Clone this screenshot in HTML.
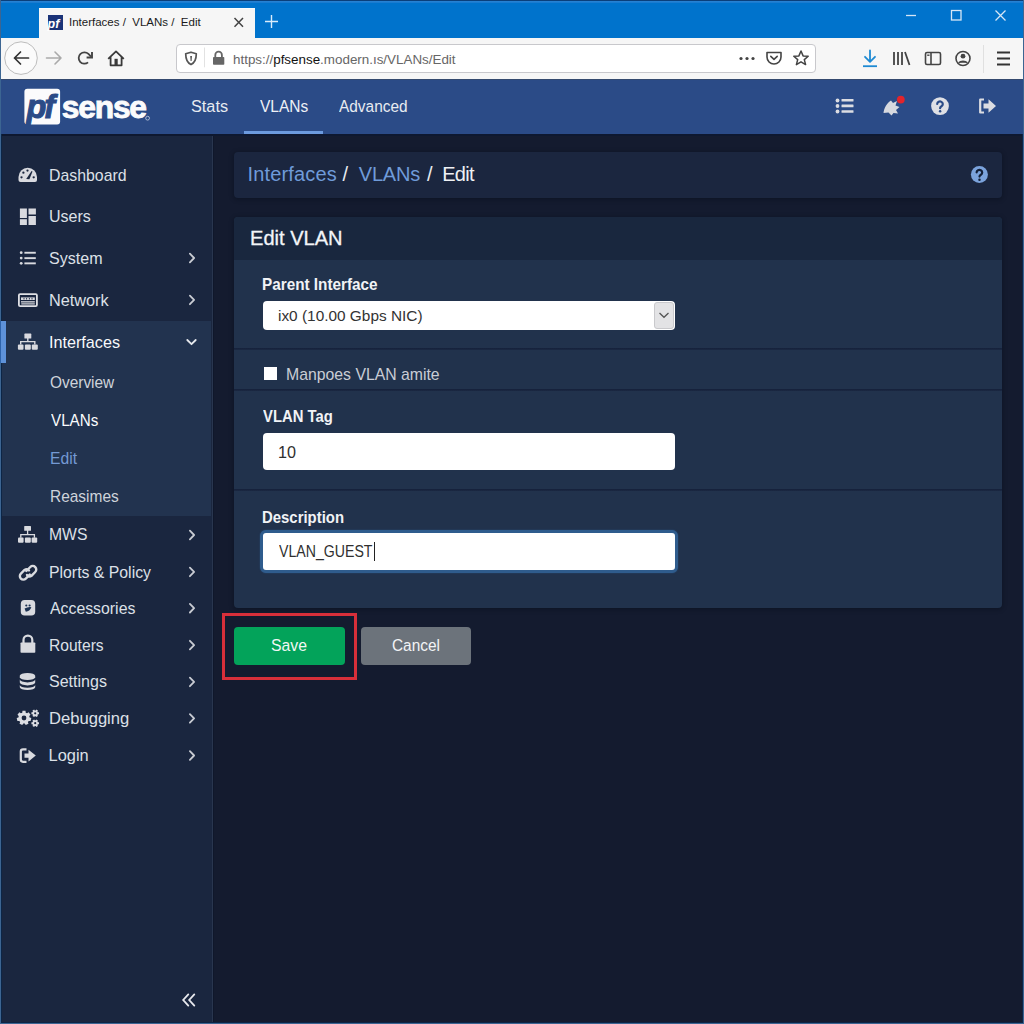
<!DOCTYPE html>
<html><head><meta charset="utf-8">
<style>
*{box-sizing:border-box;margin:0;padding:0}
html,body{width:1024px;height:1024px;overflow:hidden}
body{position:relative;background:#141b2f;font-family:"Liberation Sans",sans-serif}
.a{position:absolute}
.t{position:absolute;white-space:nowrap;line-height:1}
#titlebar{left:0;top:0;width:1024px;height:38px;background:linear-gradient(#0a3f7a 0,#0a3f7a 1px,#2a84d4 1px,#1a7bd0 2.5px,#0073cc 3.5px)}
#tab{left:39px;top:8px;width:216px;height:31px;background:#f6f6f6;border-top:1px solid #fafdff}
#toolbar{left:0;top:38px;width:1024px;height:41px;background:#f6f6f6}
#url{left:176px;top:44px;width:640px;height:29px;background:#fff;border:1px solid #c8c8cc;border-radius:4px}
#header{left:0;top:79px;width:1024px;height:55px;background:#2b4b87;border-top:1px solid #34496e}
#sidebar{left:0;top:134px;width:212px;height:890px;background:#1a263f}
#sideline{left:211.5px;top:134px;width:1.5px;height:890px;background:#29364f;box-shadow:1px 0 0 #0f172b}
#ifsec{left:0;top:321px;width:211px;height:195px;background:#22334f}
#ifbar{left:1px;top:321px;width:4px;height:42px;background:#4f86d0}
.nav{color:#d6d9df;font-size:15.5px}
.sub{color:#c3c8d1;font-size:15.5px}
#crumb{left:234px;top:152px;width:768px;height:46px;background:#1b263f;border-radius:4px;box-shadow:0 1px 5px rgba(5,10,22,0.45)}
#panel{left:234px;top:217px;width:768px;height:391px;background:#21324c;border-radius:4px;overflow:hidden;box-shadow:0 1px 5px rgba(5,10,22,0.45)}
#panelhead{left:0;top:0;width:768px;height:43px;background:#19273e}
.sep{position:absolute;left:0;width:768px;height:2px;background:linear-gradient(#15203a,#1b2943)}
.lbl{color:#f1f3f6;font-size:15px;font-weight:bold}
.inp{position:absolute;background:#fff;border-radius:4px}
.btn{position:absolute;border-radius:4px;color:#f4f6f5;font-size:16.8px;text-align:center;letter-spacing:-0.75px;-webkit-text-stroke:0.1px currentColor}
#border-l{left:0;top:0;width:1px;height:1024px;background:#3c6592}
#border-r{left:1023px;top:0;width:1px;height:1024px;background:#3c6592}
#border-b{left:0;top:1023px;width:1024px;height:1px;background:#3c6592}
#border-l2{left:1px;top:134px;width:1px;height:889px;background:#0c2546}
#border-r2{left:1022px;top:134px;width:1px;height:889px;background:#0c2546}
#border-b2{left:1px;top:1022px;width:1022px;height:1px;background:#0c2546}
</style></head><body>
<div id="titlebar" class="a"></div>
<div id="tab" class="a"></div>
<div id="toolbar" class="a"></div>
<div id="url" class="a"></div>
<div id="header" class="a"></div>
<div id="sidebar" class="a"></div>
<div id="sideline" class="a"></div>
<div id="ifsec" class="a"></div>
<div class="a" style="left:0;top:134px;width:1024px;height:1.5px;background:#0e1830"></div>

<!-- window controls -->
<svg class="a" style="left:0;top:0" width="1024" height="38">
  <line x1="906" y1="15.5" x2="916" y2="15.5" stroke="#d6e6f6" stroke-width="1.3"/>
  <rect x="951.5" y="10.5" width="9.5" height="9.5" fill="none" stroke="#d6e6f6" stroke-width="1.3"/>
  <path d="M995.5 10.5 L1005.5 20.5 M1005.5 10.5 L995.5 20.5" stroke="#d6e6f6" stroke-width="1.3"/>
  <path d="M265 21.5 H278 M271.5 15 V28" stroke="#d9ecfb" stroke-width="1.4"/>
  <path d="M234.5 18 L243 26.8 M243 18 L234.5 26.8" stroke="#444" stroke-width="1.5"/>
  <!-- favicon -->
  <rect x="48" y="15" width="15" height="15" fill="#1a3378"/>
  <text x="47.5" y="27.5" font-family="Liberation Sans" font-size="12.5" font-weight="bold" font-style="italic" fill="#fff">pf</text>
</svg>
<svg class="a" style="left:0;top:38px" width="1024" height="41">
  <circle cx="21" cy="20.1" r="16.3" fill="#fbfbfb" stroke="#bdbdbd" stroke-width="1"/>
  <path d="M28.5 20 H14.5 M20.5 14 L14.5 20 L20.5 26" fill="none" stroke="#333" stroke-width="1.7" stroke-linecap="round" stroke-linejoin="round"/>
  <path d="M46.5 20 H61 M55 14 L61 20 L55 26" fill="none" stroke="#aaa" stroke-width="1.6" stroke-linecap="round" stroke-linejoin="round"/>
  <path d="M91 18.6 L88.43 15.97 A5.7 5.7 0 1 0 88.06 24.37" fill="none" stroke="#444" stroke-width="1.8"/>
  <path d="M86.6 19.5 H92 V14" fill="none" stroke="#444" stroke-width="1.9"/>
  <path d="M108.2 20.8 L116 13.4 L123.8 20.8 M110.6 19.2 V27.3 H121.6 V19.2" fill="none" stroke="#3a3a3a" stroke-width="1.8" stroke-linejoin="round"/>
  <rect x="114.5" y="20.8" width="3.2" height="6.5" fill="#3a3a3a"/>
  <!-- shield -->
  <path d="M191 14.2 L196.3 15.8 C196.3 21.5 194.5 25 191 26.6 C187.5 25 185.7 21.5 185.7 15.8 Z" fill="none" stroke="#555" stroke-width="1.7" stroke-linejoin="round"/>
  <path d="M190.2 18 h1.8 l-0.4 5 h-1 z" fill="#555"/>
  <line x1="204.5" y1="9.5" x2="204.5" y2="29.3" stroke="#e2e2e2" stroke-width="1"/>
  <!-- lock -->
  <path d="M215.3 19 V17 A3.3 3.3 0 0 1 221.9 17 V19" fill="none" stroke="#666" stroke-width="1.8"/>
  <rect x="213" y="19" width="11.3" height="7.8" rx="0.8" fill="#666"/>
  <!-- dots pocket star -->
  <circle cx="741" cy="20.5" r="1.6" fill="#444"/><circle cx="747" cy="20.5" r="1.6" fill="#444"/><circle cx="753" cy="20.5" r="1.6" fill="#444"/>
  <path d="M767 14.5 H781 V19 A7 7 0 0 1 767 19 Z" fill="none" stroke="#444" stroke-width="1.6" stroke-linejoin="round"/>
  <path d="M770.8 18.3 L774 21.3 L777.2 18.3" fill="none" stroke="#444" stroke-width="1.6" stroke-linecap="round" stroke-linejoin="round"/>
  <path d="M801 13 L803.1 17.9 L808.2 18.3 L804.3 21.6 L805.6 26.6 L801 23.8 L796.4 26.6 L797.7 21.6 L793.8 18.3 L798.9 17.9 Z" fill="none" stroke="#444" stroke-width="1.5" stroke-linejoin="round"/>
  <!-- download -->
  <path d="M870 12.5 V23.5 M865 18.8 L870 23.8 L875 18.8" fill="none" stroke="#1e8ad3" stroke-width="1.8" stroke-linecap="round" stroke-linejoin="round"/>
  <line x1="863" y1="28.2" x2="877" y2="28.2" stroke="#1e8ad3" stroke-width="1.8"/>
  <!-- library -->
  <path d="M894 14 V27 M898 14 V27 M902 14 V27 M905 14 L909.5 27" fill="none" stroke="#444" stroke-width="1.8"/>
  <!-- sidebar -->
  <rect x="925.5" y="14.5" width="15" height="12" rx="1.5" fill="none" stroke="#444" stroke-width="1.6"/>
  <line x1="931" y1="14.5" x2="931" y2="26.5" stroke="#444" stroke-width="1.6"/>
  <rect x="927.2" y="16.5" width="2.3" height="1.4" fill="#444"/>
  <!-- account -->
  <circle cx="963" cy="20.5" r="7" fill="none" stroke="#444" stroke-width="1.6"/>
  <circle cx="963" cy="18.2" r="2.4" fill="#444"/>
  <path d="M958.6 24.8 A5.5 4 0 0 1 967.4 24.8" fill="#444" stroke="#444" stroke-width="1.5"/>
  <line x1="983.5" y1="7" x2="983.5" y2="35" stroke="#e0e0e0" stroke-width="1"/>
  <!-- hamburger -->
  <path d="M997 14.5 H1010 M997 20.5 H1010 M997 26.5 H1010" stroke="#333" stroke-width="1.8"/>
</svg>

<svg class="a" style="left:0;top:79px" width="1024" height="55">
  <!-- logo -->
  <rect x="24.4" y="9.8" width="35.7" height="35.8" rx="3" fill="#fbfbfc"/>
  <text x="26.5" y="38.6" font-family="Liberation Sans" font-size="32.5" font-weight="bold" font-style="italic" fill="#2b4b87" stroke="#2b4b87" stroke-width="1" letter-spacing="-2.2">pf</text>
  <text x="61.7" y="38.8" font-family="Liberation Sans" font-size="31.8" font-weight="bold" fill="#fbfbfc" stroke="#fbfbfc" stroke-width="0.9" letter-spacing="-1.2">sense</text>
  <circle cx="147.6" cy="39.2" r="1.9" fill="none" stroke="#c9d1e0" stroke-width="0.8"/>
  <!-- list icon -->
  <g fill="#dcdde2">
    <circle cx="837.5" cy="21.5" r="1.9"/><circle cx="837.5" cy="27" r="1.9"/><circle cx="837.5" cy="32.5" r="1.9"/>
    <rect x="841.5" y="20" width="12" height="2.6" rx="0.5"/><rect x="841.5" y="25.6" width="12" height="2.6" rx="0.5"/><rect x="841.5" y="31.2" width="12" height="2.6" rx="0.5"/>
  </g>
  <!-- rocket blob -->
  <path d="M883.5 34 C884 29 887 24 891 21.5 L893 24 L897 22 L895.5 26.5 L899.5 28 L896 31 L898 34.5 L893.5 34 L891.5 36.5 L888.5 33.5 Z" fill="#d7d9df"/>
  <circle cx="900.8" cy="20.6" r="3.9" fill="#e3242b"/>
  <!-- help -->
  <circle cx="940" cy="27.1" r="8.9" fill="#dfe0e5"/>
  <g transform="translate(930.6,17.6)"><path d="M6.6 7.4 A2.8 2.6 0 1 1 10.9 9.7 Q9.5 10.5 9.5 11.6" fill="none" stroke="#2b4b87" stroke-width="2.2" stroke-linecap="round"/><circle cx="9.5" cy="14.7" r="1.25" fill="#2b4b87"/></g>
  <!-- sign out -->
  <path d="M984 20.5 H980.2 V33.5 H984" fill="none" stroke="#dcdde2" stroke-width="2.2" stroke-linejoin="round"/>
  <path d="M983.5 24.5 H988.5 V20.2 L996 27 L988.5 33.8 V29.5 H983.5 Z" fill="#dcdde2"/>
</svg>

<svg class="a" style="left:0;top:134px" width="211" height="890">
<g fill="#d9dadf">
  <!-- dashboard gauge -->
  <path d="M18.5 43 A9.25 9.25 0 0 1 37 43 V46 Q37 48.1 35 48.1 H20.5 Q18.5 48.1 18.5 46 Z"/>
  <!-- users grid -->
  <rect x="19.9" y="74.5" width="7" height="9.5"/><rect x="28.5" y="74.5" width="7.4" height="6"/>
  <rect x="19.9" y="85.2" width="7" height="5.8"/><rect x="28.5" y="82" width="7.4" height="9"/>
  <!-- system list -->
  <circle cx="21.2" cy="118.7" r="1.4"/><circle cx="21.2" cy="124.1" r="1.4"/><circle cx="21.2" cy="129.3" r="1.4"/>
  <rect x="24.4" y="117.8" width="11.4" height="1.9"/><rect x="24.4" y="123.2" width="11.4" height="1.9"/><rect x="24.4" y="128.4" width="11.4" height="1.9"/>
  <!-- interfaces sitemap -->
  <rect x="24.4" y="199.6" width="6.9" height="5" rx="0.6"/>
  <rect x="17.9" y="210.4" width="5.6" height="5.4" rx="1"/><rect x="24.9" y="210.4" width="5.9" height="5.4" rx="1"/><rect x="31.8" y="210.4" width="6" height="5.4" rx="1"/>
  <!-- MWS sitemap -->
  <rect x="24.2" y="392" width="6.8" height="4.8" rx="0.6"/>
  <rect x="18" y="403.6" width="5.6" height="5.2" rx="1"/><rect x="24.9" y="403.6" width="5.9" height="5.2" rx="1"/><rect x="31.6" y="403.6" width="5.6" height="5.2" rx="1"/>
  <!-- lock -->
  <rect x="20.5" y="508.5" width="14.8" height="10.3" rx="0.8"/>
  <!-- database -->
  <path d="M19.8 541.7 A7.7 2.8 0 0 1 35.2 541.7 V543.2 A7.7 2.8 0 0 1 19.8 543.2 Z"/>
  <path d="M19.8 545.6 A7.7 2.8 0 0 0 35.2 545.6 V548.6 A7.7 2.8 0 0 1 19.8 548.6 Z"/>
  <path d="M19.8 551 A7.7 2.8 0 0 0 35.2 551 V553.2 A7.7 2.8 0 0 1 19.8 553.2 Z"/>
  <!-- accessories -->
  <rect x="20.8" y="466" width="14.4" height="15.6" rx="3.8"/>
  <!-- login -->
  <path d="M26.5 615.3 H23 A2.2 2.2 0 0 0 20.8 617.5 V625.6 A2.2 2.2 0 0 0 23 627.8 H26.5" fill="none" stroke="#d9dadf" stroke-width="2.2"/>
  <path d="M24.5 619.5 H28.5 V615.8 L35.8 621.6 L28.5 627.4 V623.7 H24.5 Z"/>
</g>
  <!-- gauge details -->
  <g fill="#1b263e">
    <circle cx="21.5" cy="43.3" r="1.15"/><circle cx="23.4" cy="38.7" r="1.15"/><circle cx="27.5" cy="36.6" r="1.15"/><circle cx="33.7" cy="43.3" r="1.15"/>
    <path d="M26.2 44.9 L31.6 37 L32.5 37.5 L29.4 45.3 Z"/>
  </g>
  <!-- network keyboard -->
  <rect x="18.9" y="160.1" width="18" height="12" rx="1.2" fill="none" stroke="#dfe0e5" stroke-width="1.8"/>
  <rect x="21" y="163.4" width="13.8" height="2.6" fill="#d9dadf"/>
  <path d="M24 163.9 v1.6 M26.6 163.9 v1.6 M29.4 163.9 v1.6 M32 163.9 v1.6" stroke="#1b263e" stroke-width="0.9"/>
  <rect x="21" y="167.2" width="13.8" height="1.3" fill="#d9dadf"/>
  <rect x="21.3" y="169.3" width="13.5" height="1.2" fill="#d9dadf"/>
  <!-- sitemap connectors -->
  <path d="M27.8 204 V207.6 M20.7 210.6 V207.6 H34.8 V210.6" fill="none" stroke="#d9dadf" stroke-width="1.4"/>
  <path d="M27.6 396 V400.6 M20.8 403.8 V400.6 H34.4 V403.8" fill="none" stroke="#d9dadf" stroke-width="1.3"/>
  <!-- lock shackle -->
  <path d="M23.5 509 V506 A4.4 4.4 0 0 1 32.3 506 V509" fill="none" stroke="#d9dadf" stroke-width="2.2"/>
  <!-- link -->
  <g fill="none" stroke="#d9dadf" stroke-width="2.4" stroke-linecap="round">
    <path d="M26.3 437 L30.3 433 A3.5 3.5 0 0 1 35.2 438 L31.6 441.7 A3.5 3.5 0 0 1 27 441"/>
    <path d="M29 436.5 A3.5 3.5 0 0 0 24.5 436 L20.9 439.6 A3.5 3.5 0 0 0 25.8 444.6 L29.8 440.6"/>
  </g>
  <!-- accessories mark -->
  <g fill="#1c3152"><circle cx="26.3" cy="471.5" r="1.1"/><circle cx="29.6" cy="471.5" r="1.1"/><path d="M24.6 474.6 Q28 472.6 31.4 473.2 Q29.8 477.2 25.8 477.8 Z"/></g>
  <!-- gears -->
  <g fill="#dcdde2"><path d="M22.27 578.68 L22.48 576.86 L25.52 576.86 L25.73 578.68 L27.08 579.32 L28.63 578.36 L30.53 580.74 L29.24 582.04 L29.58 583.49 L31.30 584.11 L30.62 587.07 L28.80 586.88 L27.87 588.04 L28.47 589.77 L25.73 591.09 L24.75 589.55 L23.25 589.55 L22.27 591.09 L19.53 589.77 L20.13 588.04 L19.20 586.88 L17.38 587.07 L16.70 584.11 L18.42 583.49 L18.76 582.04 L17.47 580.74 L19.37 578.36 L20.92 579.32 Z"/><path d="M37.90 578.24 L38.98 578.34 L38.98 580.26 L37.90 580.36 L37.47 581.11 L37.92 582.09 L36.25 583.05 L35.63 582.17 L34.77 582.17 L34.15 583.05 L32.48 582.09 L32.93 581.11 L32.50 580.36 L31.42 580.26 L31.42 578.34 L32.50 578.24 L32.93 577.49 L32.48 576.51 L34.15 575.55 L34.77 576.43 L35.63 576.43 L36.25 575.55 L37.92 576.51 L37.47 577.49 Z"/><path d="M37.90 588.14 L38.98 588.24 L38.98 590.16 L37.90 590.26 L37.47 591.01 L37.92 591.99 L36.25 592.95 L35.63 592.07 L34.77 592.07 L34.15 592.95 L32.48 591.99 L32.93 591.01 L32.50 590.26 L31.42 590.16 L31.42 588.24 L32.50 588.14 L32.93 587.39 L32.48 586.41 L34.15 585.45 L34.77 586.33 L35.63 586.33 L36.25 585.45 L37.92 586.41 L37.47 587.39 Z"/></g>
  <g fill="#1b263e">
    <circle cx="24" cy="584" r="2.4"/><circle cx="35.2" cy="579.3" r="1.1"/><circle cx="35.2" cy="589.2" r="1.1"/>
  </g>
  <!-- chevrons -->
  <g fill="none" stroke="#c9ccd3" stroke-width="1.8" stroke-linecap="round" stroke-linejoin="round" transform="translate(1.3,0)">
    <path d="M188.6 119.7 L192.8 124 L188.6 128.3"/>
    <path d="M188.6 161.6 L192.8 165.9 L188.6 170.2"/>
    <path d="M186 206 L190.2 210.2 L194.4 206" stroke="#e6e8ec"/>
    <path d="M188.6 396.7 L192.8 401 L188.6 405.3"/>
    <path d="M188.6 433.6 L192.8 437.9 L188.6 442.2"/>
    <path d="M188.6 469.9 L192.8 474.2 L188.6 478.5"/>
    <path d="M188.6 506.8 L192.8 511.1 L188.6 515.4"/>
    <path d="M188.6 543.6 L192.8 547.9 L188.6 552.2"/>
    <path d="M188.6 580.1 L192.8 584.4 L188.6 588.7"/>
    <path d="M188.6 617.2 L192.8 621.5 L188.6 625.8"/>
  </g>
  <!-- collapse -->
  <g fill="none" stroke="#e8e9ee" stroke-width="1.8" stroke-linecap="round">
    <path d="M188.3 860.4 L183.2 866 L188.3 871.6 M194.3 860.4 L189.2 866 L194.3 871.6"/>
  </g>
</svg>

<div class="t" style="left:69px;top:17.3px;font-size:11.5px;color:#1b1b1b">Interfaces /&nbsp; VLANs /&nbsp; Edit</div>
<div class="t" style="left:233px;top:52.5px;font-size:13.4px;color:#666">https://<span style="color:#111">pfsense</span>.modern.ıs/VLANs/Edit</div>

<div class="t" style="left:191.23px;top:98.56px;font-size:16.8px;color:#e8ebf1;transform:scaleX(0.968);transform-origin:0 0">Stats</div>
<div class="t" style="left:259.7px;top:98.56px;font-size:16.8px;color:#eef1f6;transform:scaleX(0.923);transform-origin:0 0">VLANs</div>
<div class="t" style="left:339.0px;top:98.56px;font-size:16.8px;color:#e8ebf1;transform:scaleX(0.919);transform-origin:0 0">Advanced</div>
<div class="a" style="left:244.3px;top:130.6px;width:78.8px;height:3.6px;background:#6c9ade"></div>

<div class="t" style="left:48.53px;top:166.51px;font-size:16.4px;color:#dde0e7;transform:scaleX(0.968);transform-origin:0 0">Dashboard</div>
<div class="t" style="left:48.52px;top:207.51px;font-size:16.4px;color:#dde0e7;transform:scaleX(0.978);transform-origin:0 0">Users</div>
<div class="t" style="left:48.52px;top:249.51px;font-size:16.4px;color:#dde0e7;transform:scaleX(0.979);transform-origin:0 0">System</div>
<div class="t" style="left:48.51px;top:291.51px;font-size:16.4px;color:#dde0e7;transform:scaleX(0.992);transform-origin:0 0">Network</div>
<div class="t" style="left:48.51px;top:333.51px;font-size:16.4px;color:#f8f9fb;transform:scaleX(0.987);transform-origin:0 0">Interfaces</div>
<div class="t" style="left:49.96px;top:373.51px;font-size:16.4px;color:#cfd3db;transform:scaleX(0.94);transform-origin:0 0">Overview</div>
<div class="t" style="left:50.9px;top:411.51px;font-size:16.4px;color:#fbfcfd;transform:scaleX(0.927);transform-origin:0 0">VLANs</div>
<div class="t" style="left:49.94px;top:449.51px;font-size:16.4px;color:#7499d4;transform:scaleX(0.956);transform-origin:0 0">Edit</div>
<div class="t" style="left:49.96px;top:487.51px;font-size:16.4px;color:#cfd3db;transform:scaleX(0.943);transform-origin:0 0">Reasimes</div>
<div class="t" style="left:48.64px;top:525.51px;font-size:16.4px;color:#dde0e7;transform:scaleX(0.958);transform-origin:0 0">MWS</div>
<div class="t" style="left:48.64px;top:563.51px;font-size:16.4px;color:#dde0e7;transform:scaleX(0.965);transform-origin:0 0">Plorts &amp; Policy</div>
<div class="t" style="left:49.6px;top:599.51px;font-size:16.4px;color:#dde0e7;transform:scaleX(0.966);transform-origin:0 0">Accessories</div>
<div class="t" style="left:48.65px;top:636.51px;font-size:16.4px;color:#dde0e7;transform:scaleX(0.952);transform-origin:0 0">Routers</div>
<div class="t" style="left:48.62px;top:672.51px;font-size:16.4px;color:#dde0e7;transform:scaleX(0.978);transform-origin:0 0">Settings</div>
<div class="t" style="left:48.59px;top:709.51px;font-size:16.4px;color:#dde0e7;transform:scaleX(1.012);transform-origin:0 0">Debugging</div>
<div class="t" style="left:48.6px;top:746.51px;font-size:16.4px;color:#dde0e7;transform:scaleX(1.0);transform-origin:0 0">Login</div>

<div id="crumb" class="a"></div>
<div class="t" style="left:247.6px;top:164.1px;font-size:20px;color:#6f9bd9;letter-spacing:0.15px">Interfaces</div>
<div class="t" style="left:342.5px;top:164.1px;font-size:20px;color:#e8ebf0">/</div>
<div class="t" style="left:358.8px;top:164.1px;font-size:20px;color:#6f9bd9;letter-spacing:-0.2px">VLANs</div>
<div class="t" style="left:427px;top:164.1px;font-size:20px;color:#e8ebf0">/</div>
<div class="t" style="left:442.2px;top:164.1px;font-size:20px;color:#eef0f4;letter-spacing:-0.7px">Edit</div>
<svg class="a" style="left:970px;top:165px" width="20" height="20">
  <circle cx="9.4" cy="9.5" r="8.5" fill="#7ba3dc"/>
  <path d="M6.6 7.4 A2.8 2.6 0 1 1 10.9 9.7 Q9.5 10.5 9.5 11.6" fill="none" stroke="#142038" stroke-width="2.2" stroke-linecap="round"/><circle cx="9.5" cy="14.7" r="1.25" fill="#142038"/>
</svg>

<div id="panel" class="a">
  <div id="panelhead" class="a"></div>
  <div class="sep" style="top:131px"></div>
  <div class="sep" style="top:172px"></div>
  <div class="sep" style="top:272px"></div>
</div>
<div class="t" style="left:250.49px;top:226.55px;font-size:21px;color:#f3f5f8;-webkit-text-stroke:0.3px #f3f5f8;transform:scaleX(0.955);transform-origin:0 0">Edit VLAN</div>
<div class="t" style="left:262.05px;top:275.53px;font-size:16.2px;color:#f1f3f6;font-weight:bold;transform:scaleX(0.945);transform-origin:0 0">Parent Interface</div>
<div class="inp" style="left:263px;top:301px;width:412px;height:29px"></div>
<div class="a" style="left:654px;top:302px;width:20px;height:26.5px;background:#e3e3e5;border:1px solid #c9c9cc;border-radius:3px"></div>
<svg class="a" style="left:654px;top:302px" width="20" height="27"><path d="M5.5 11 L10 15.3 L14.5 11" fill="none" stroke="#555" stroke-width="1.3"/></svg>
<div class="t" style="left:278.0px;top:307.55px;font-size:15.36px;color:#333;transform:scaleX(1.002);transform-origin:0 0">ix0 (10.00 Gbps NIC)</div>
<div class="a" style="left:263.7px;top:366.8px;width:13.6px;height:13px;background:#fff"></div>
<div class="t" style="left:285.75px;top:366.54px;font-size:16.6px;color:#c9cdd5;transform:scaleX(0.952);transform-origin:0 0">Manpoes VLAN amite</div>
<div class="t" style="left:263.3px;top:407.53px;font-size:16.2px;color:#f1f3f6;font-weight:bold;transform:scaleX(0.916);transform-origin:0 0">VLAN Tag</div>
<div class="inp" style="left:263px;top:433px;width:412px;height:37px"></div>
<div class="t" style="left:277.89px;top:443.52px;font-size:16.1px;color:#2f2f2f;transform:scaleX(1.006);transform-origin:0 0">10</div>
<div class="t" style="left:262.38px;top:508.53px;font-size:16.2px;color:#f1f3f6;font-weight:bold;transform:scaleX(0.921);transform-origin:0 0">Description</div>
<div class="inp" style="left:260px;top:530px;width:418.4px;height:43px;border:3px solid #2f5c8d;border-radius:6px;box-shadow:0 0 1.5px #2a5280"></div>
<div class="t" style="left:278.9px;top:542.53px;font-size:16.1px;color:#2f2f2f;transform:scaleX(0.878);transform-origin:0 0">VLAN_GUEST</div>
<div class="a" style="left:374.2px;top:542px;width:1.1px;height:18.5px;background:#222"></div>

<div class="a" style="left:222px;top:613px;width:135px;height:67px;border:3px solid #d82f3a"></div>
<div class="btn" style="left:234px;top:627px;width:111px;height:38px;background:#03a35a"></div>
<div class="t" style="left:271.38px;top:636.58px;font-size:17.2px;color:#f2f7f4;transform:scaleX(0.919);transform-origin:0 0">Save</div>
<div class="btn" style="left:361px;top:627px;width:110px;height:38px;background:#6c737b"></div>
<div class="t" style="left:391.5px;top:636.58px;font-size:17.2px;color:#f2f3f5;transform:scaleX(0.896);transform-origin:0 0">Cancel</div>

<div id="border-l" class="a"></div>
<div id="border-r" class="a"></div>
<div id="border-b" class="a"></div>
<div id="border-l2" class="a"></div>
<div id="border-r2" class="a"></div>
<div id="border-b2" class="a"></div>
<div class="a" style="left:0;top:321.3px;width:5.8px;height:42.2px;background:linear-gradient(90deg,#2f64ab 0,#2f64ab 1px,#5e92d9 1px)"></div>
</body></html>
